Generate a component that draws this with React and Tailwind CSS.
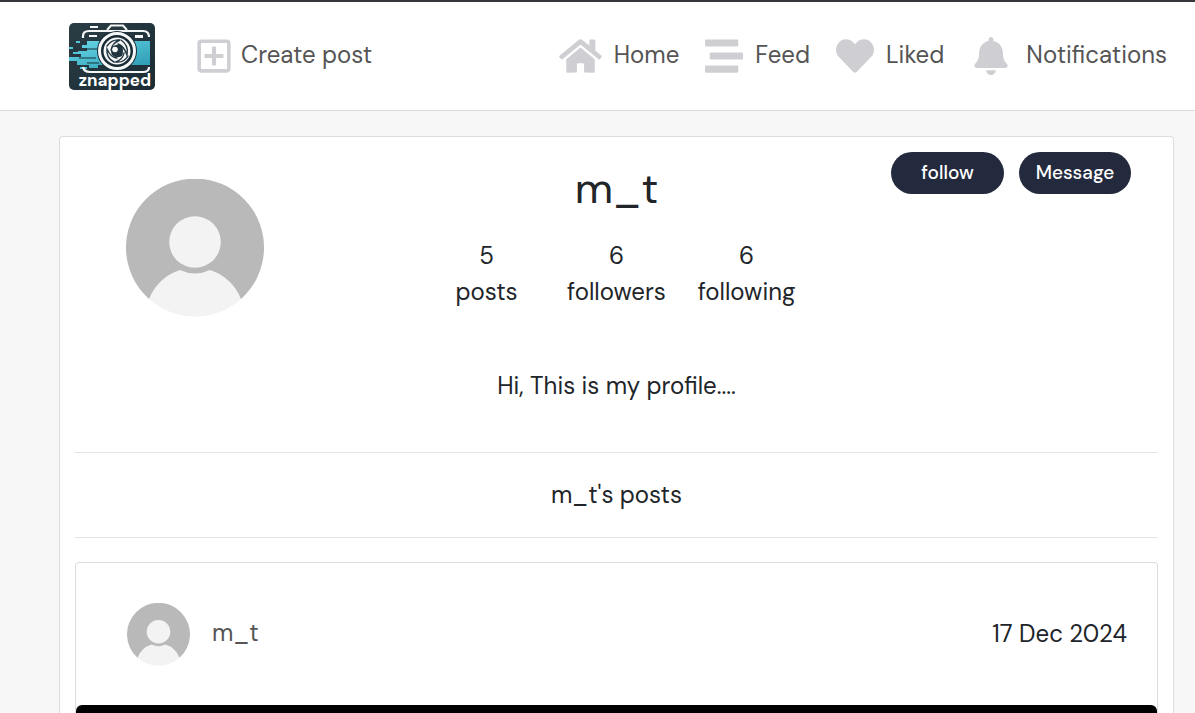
import { FaBell, FaHeart, FaHome, FaRegPlusSquare, FaStream } from "react-icons/fa";

function Logo() {
  return (
    <svg viewBox="0 0 86 67" role="img" aria-label="znapped" className="h-[67px] w-[86px]">
      <defs>
        <linearGradient id="teal" x1="0" x2="1" y1="0" y2="1">
          <stop offset="0" stopColor="#6ad8e8" />
          <stop offset="1" stopColor="#2b9ab2" />
        </linearGradient>
        <linearGradient id="dark" x1="0" x2="1" y1="0" y2="1">
          <stop offset="0" stopColor="#2a3c44" />
          <stop offset="1" stopColor="#1b2c34" />
        </linearGradient>
      </defs>
      <rect width="86" height="67" rx="5" fill="url(#dark)" />
      <path d="M18 18H81V42H29V45H20V42H8V38H0V34H12V31H9V28H18V25H13V22H18Z" fill="url(#teal)" />
      <path d="M0 24H4V26H0ZM7 18H11V20H7ZM4 29H11V31H4ZM11 44H18V46H11Z" fill="#55c6d7" />
      <path d="M17 26H28M10 35H27M18 40H30" stroke="#193039" strokeWidth="1.2" />
      <path d="M14 15V13Q14 8 20 8H74Q80 8 80 14" fill="none" stroke="#f5f7f7" strokeWidth="2.2" />
      <path d="M38 7L42 2.500H54L58 7" fill="none" stroke="#f5f7f7" strokeWidth="2" />
      <path d="M14 44Q15 49 21 49H74Q80 49 80 44" fill="none" stroke="#f5f7f7" strokeWidth="2.2" />
      <path d="M21 3H29V5H21ZM20 12H28V14H20ZM66 12H74V15H66Z" fill="#f5f7f7" />
      <circle cx="48" cy="28" r="20" fill="#182b35" />
      <circle cx="48" cy="28" r="17.5" fill="none" stroke="#f5f7f7" strokeWidth="3" />
      <circle cx="48" cy="28" r="13.5" fill="#f5f7f7" />
      <g fill="none" stroke="#20353f" strokeWidth="1.4" strokeLinecap="round">
        <path d="M38 23Q43 16 51 17Q43 20 42 27" />
        <path d="M52 17Q60 22 58 32Q55 23 49 21" />
        <path d="M59 33Q55 40 47 39Q54 36 55 30" />
        <path d="M45 39Q37 35 38 26Q42 35 48 35" />
      </g>
      <path d="M43 24Q48 20 53 23Q55 28 53 33Q47 36 43 32Q41 28 43 24Z" fill="#20353f" />
      <circle cx="46" cy="26.500" r="2.800" fill="#f5f7f7" />
      <text x="46" y="63" textAnchor="middle" fill="#ffffff" fontFamily="'DM Sans', 'Open Sans', sans-serif" fontWeight="700" fontSize="17">znapped</text>
    </svg>
  );
}

function Avatar({ className }) {
  return (
    <svg viewBox="0 0 138 138" role="img" aria-label="m_t" className={`shrink-0 ${className}`}>
      <path d="M23 120A69 69 0 1 1 115 120Z" fill="#b9b9b9" />
      <path d="M23 120A48 48 0 0 1 54 91Q69 98 84 91A48 48 0 0 1 115 120A69 69 0 0 1 23 120Z" fill="#f3f3f3" />
      <circle cx="69" cy="63" r="25.800" fill="#f3f3f3" />
    </svg>
  );
}

function NavLink({ icon: Icon, iconWidth = "w-[38px]", className = "gap-3", children }) {
  return (
    <a href="#" className={`flex items-center ${className}`}>
      <Icon className={`h-[38px] shrink-0 text-[#cfced3] ${iconWidth}`} />
      <span className="pb-[3px]">{children}</span>
    </a>
  );
}

const stats = [
  { count: 5, label: "posts" },
  { count: 6, label: "followers" },
  { count: 6, label: "following" },
];

export default function App() {
  return (
    <div className="flex min-h-screen flex-col bg-[#f7f7f7] font-['DM_Sans',Inter,sans-serif] text-[24px] leading-9 text-[#212529]">
      <header className="flex h-[111px] items-center border-t-2 border-b border-t-[#36373a] border-b-[#dcdddf] bg-white pr-7 pl-[69px] text-[#555555]">
        <a href="#"><Logo /></a>
        <NavLink icon={FaRegPlusSquare} iconWidth="w-[34px]" className="ml-[42px] gap-[10px]">Create post</NavLink>
        <nav className="ml-auto flex items-center gap-[26px]">
          <NavLink icon={FaHome} iconWidth="w-[43px]">Home</NavLink>
          <NavLink icon={FaStream}>Feed</NavLink>
          <NavLink icon={FaHeart}>Liked</NavLink>
          <NavLink icon={FaBell} iconWidth="w-[34px]" className="ml-1 gap-[18px]">Notifications</NavLink>
        </nav>
      </header>

      <main className="flex grow flex-col pt-[25px] pr-[21px] pl-[59px]">
        <section className="flex grow flex-col rounded-t border border-b-0 border-[#dcdddf] bg-white px-[15px] pt-[15px]">
          <div className="grid grid-cols-[1fr_390px_1fr]">
            <Avatar className="mt-[27px] ml-[51px] size-[138px]" />
            <div className="pt-3 text-center">
              <h1 className="text-[43px] leading-[48px]">m_t</h1>
              <dl className="mt-[26px] grid grid-cols-3">
                {stats.map(({ count, label }) => (
                  <div key={label} className="flex flex-col-reverse">
                    <dt>{label}</dt>
                    <dd>{count}</dd>
                  </div>
                ))}
              </dl>
            </div>
            <div className="flex items-start justify-end gap-[15px] pr-[27px] text-[19px] font-medium text-white">
              <button type="button" className="h-[42px] w-[113px] rounded-full bg-[#242a3d]">follow</button>
              <button type="button" className="h-[42px] w-[112px] rounded-full bg-[#242a3d]">Message</button>
            </div>
          </div>

          <p className="mt-[51px] mb-12 text-center">Hi, This is my profile....</p>
          <h2 className="border-y border-[#e4e4e5] py-6 text-center">m_t's posts</h2>

          <article className="mt-6 flex grow flex-col rounded-t border border-b-0 border-[#dcdddf]">
            <div className="flex h-[142px] items-center justify-between pr-[30px] pl-[51px]">
              <a href="#" className="flex items-center gap-[22px] text-[#555555]">
                <Avatar className="size-[63px]" />
                <span className="pb-[3px]">m_t</span>
              </a>
              <time dateTime="2024-12-17">17 Dec 2024</time>
            </div>
            <div className="min-h-2 grow rounded-t-md bg-black" />
          </article>
        </section>
      </main>
    </div>
  );
}
